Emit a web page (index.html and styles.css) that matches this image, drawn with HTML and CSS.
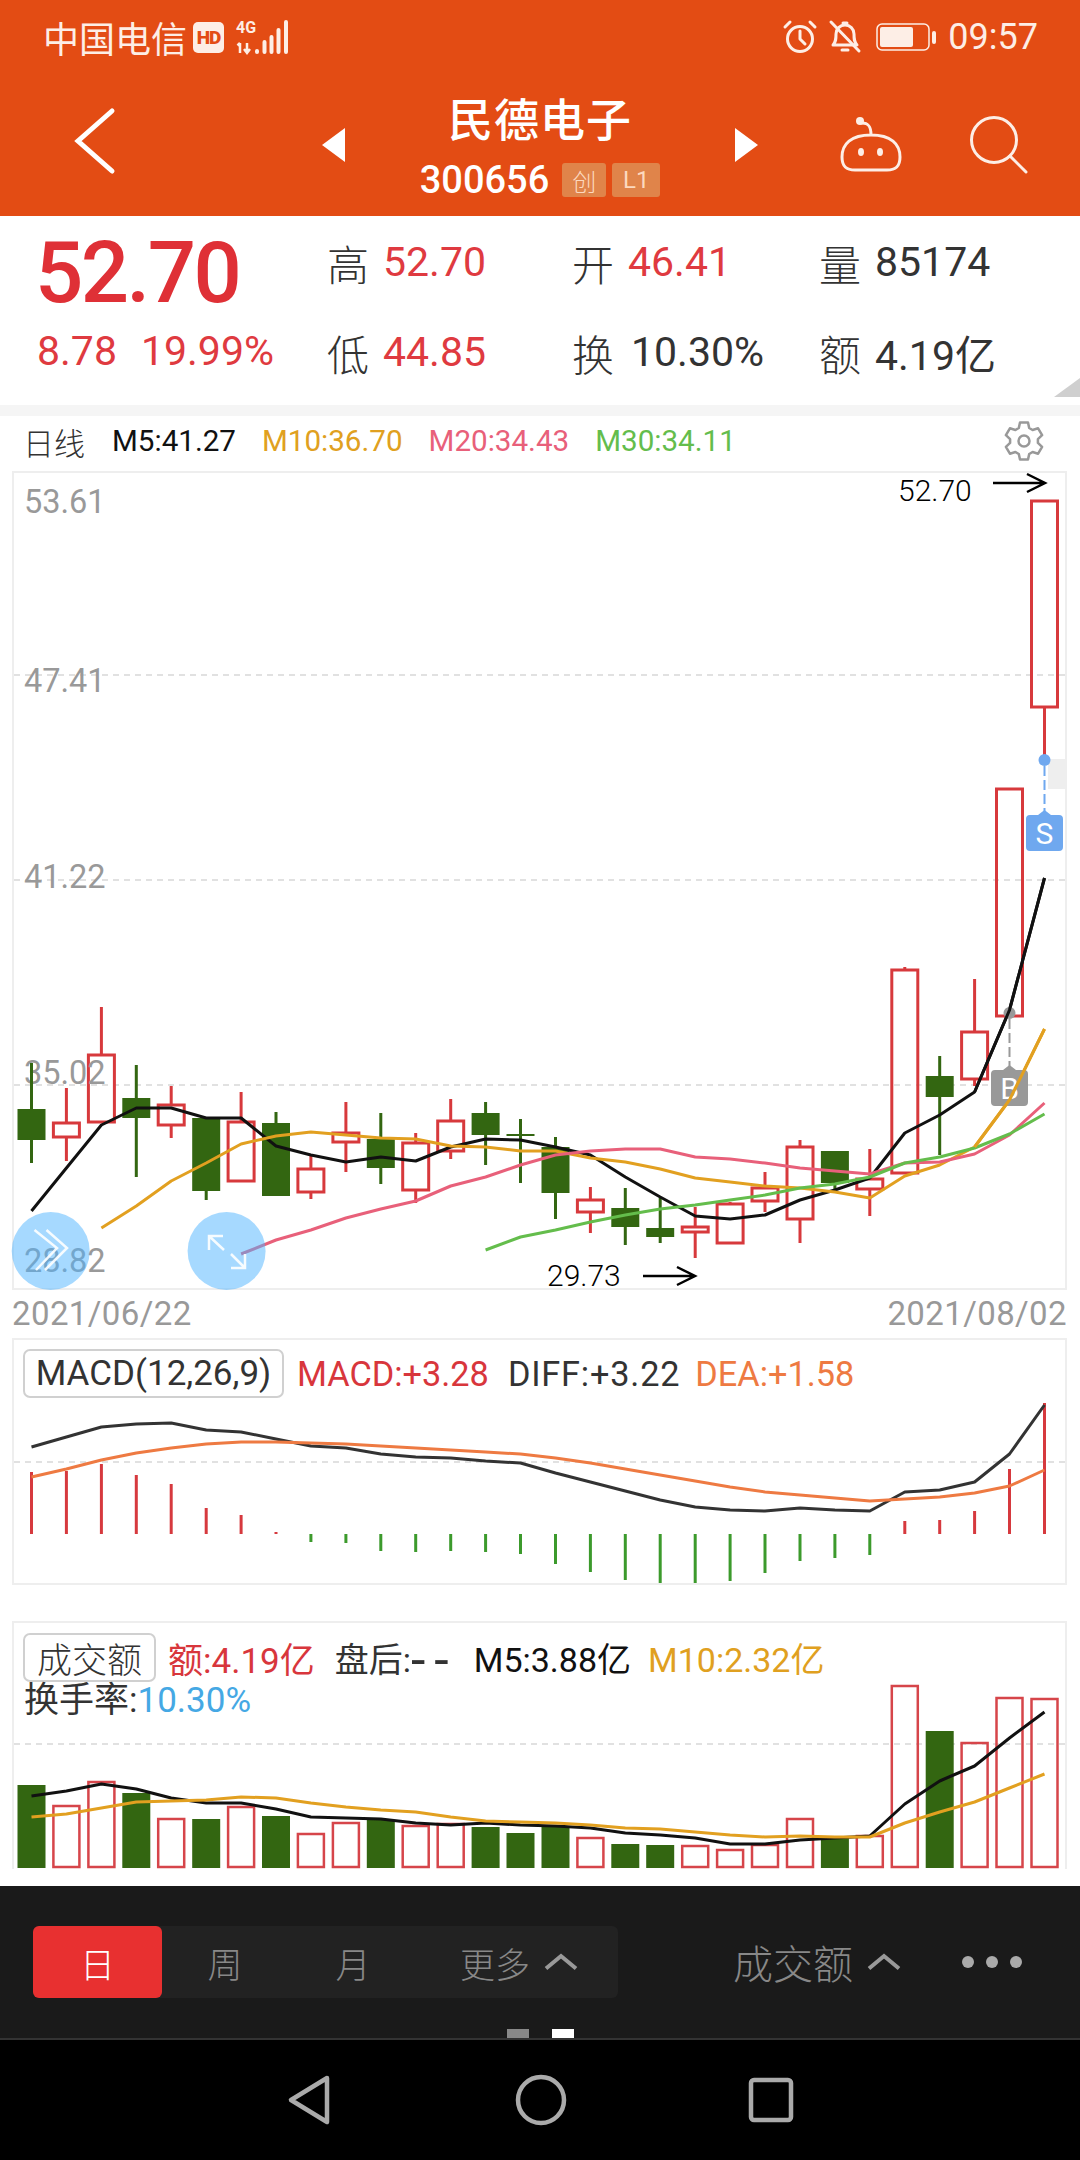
FILE: index.html
```html
<!DOCTYPE html>
<html lang="zh-CN">
<head>
<meta charset="utf-8">
<title>民德电子</title>
<link rel="stylesheet" href="styles.css">
</head>
<body>
<header class="top">
  <div class="status">
    <span class="carrier">中国电信</span>
    <span class="hd">HD</span>
    <svg class="signal" width="58" height="36" viewBox="0 0 58 36">
      <text class="sig-text" x="0" y="13">4G</text>
      <path class="sig-arrows" d="M4 23v10M1.5 25.5L4 23M11 23v8M8 29l3 4 3-4"/>
      <path class="sig-bars" d="M21 32v-1M28.500 32v-10M35.500 32v-15M42.500 32v-22M50 32V2"/>
    </svg>
    <span class="status-right">
      <svg class="st-icon" width="36" height="36" viewBox="0 0 36 36">
        <circle class="line" cx="18" cy="20" r="12.500"/>
        <path class="line" d="M18 12v8l5 5M3 8l5-5M33 8l-5-5"/>
      </svg>
      <svg class="st-icon" width="34" height="36" viewBox="0 0 34 36">
        <path class="line" d="M5 26c3-3 3-6 3-11 0-5 4-9 9-9s9 4 9 9c0 5 0 8 3 11z"/>
        <path class="line" d="M14 31h6M15 4h4M3 3l28 29"/>
      </svg>
      <svg class="batt" width="62" height="30" viewBox="0 0 62 30">
        <rect class="batt-case" x="1" y="2" width="52" height="26" rx="5"/>
        <rect class="batt-fill" x="4" y="5" width="33" height="20" rx="2"/>
        <rect class="batt-fill" x="56" y="9" width="4" height="13" rx="2"/>
      </svg>
      <span class="time">09:57</span>
    </span>
  </div>
  <div class="navrow">
    <div class="nav-left">
      <svg width="40" height="66" viewBox="0 0 40 66"><path class="back" d="M36 3L2 33l34 30"/></svg>
    </div>
    <div class="nav-center">
      <span class="tri tri-l"></span>
      <div class="stack">
        <div class="title">民德电子</div>
        <div class="coderow"><span class="code">300656</span><span class="tag">创</span><span class="tag tag-l">L1</span></div>
      </div>
      <span class="tri tri-r"></span>
    </div>
    <div class="nav-right">
      <svg width="64" height="58" viewBox="0 0 64 58">
        <path class="line" d="M32 20c-20 0-29 9-29 22 0 10 5 13 13 13h32c8 0 13-3 13-13 0-13-9-22-29-22zM32 20c0-8-2-12-9-12"/>
        <circle class="dot" cx="21" cy="6" r="4"/>
        <ellipse class="dot" cx="22" cy="37" rx="3" ry="4"/>
        <ellipse class="dot" cx="41" cy="37" rx="3" ry="4"/>
      </svg>
      <svg width="60" height="60" viewBox="0 0 60 60">
        <circle class="line" cx="25" cy="25" r="22.500"/>
        <path class="line" d="M41 41l16 16"/>
      </svg>
    </div>
  </div>
</header>

<section class="quote">
  <div class="big">52.70</div>
  <div class="cell"><span class="lab">高</span><span class="val up">52.70</span></div>
  <div class="cell"><span class="lab">开</span><span class="val up">46.41</span></div>
  <div class="cell"><span class="lab">量</span><span class="val">85174</span></div>
  <div class="sub"><span>8.78</span><span>19.99%</span></div>
  <div class="cell"><span class="lab">低</span><span class="val up">44.85</span></div>
  <div class="cell"><span class="lab">换</span><span class="val turn">10.30%</span></div>
  <div class="cell"><span class="lab">额</span><span class="val">4.19亿</span></div>
  <span class="corner"></span>
</section>
<div class="band"></div>

<main class="charts">
  <div class="legend">
    <span class="leg-day">日线</span>
    <span class="c-black">M5:41.27</span>
    <span class="c-gold">M10:36.70</span>
    <span class="c-pink">M20:34.43</span>
    <span class="c-green">M30:34.11</span>
    <svg class="gear" width="40" height="40" viewBox="0 0 40 40">
      <path class="gear-line" d="M14.800 7L16 1.400H24L25.200 7 28.600 9 34.100 7.300 38.100 14.100 33.900 18.100V21.900L38.100 25.900 34.100 32.700 28.600 31 25.200 33 24 38.600H16L14.800 33 11.400 31 5.900 32.700 1.900 25.900 6.100 21.900V18.100L1.900 14.100 5.900 7.300 11.400 9z"/>
      <circle class="gear-line" cx="20" cy="20" r="5.500"/>
    </svg>
  </div>

  <div class="panel panel-main">
    <svg class="plot" width="1051" height="815" viewBox="14 473 1051 815">
      <path class="grid" d="M14 675H1065M14 880H1065M14 1085H1065"/>
      <rect class="shade" x="1048" y="759" width="17" height="30"/>

      <g class="body-r">
        <rect x="53.400" y="1123" width="26" height="14"/>
        <rect x="88.400" y="1055" width="26" height="67"/>
        <rect x="158.200" y="1105" width="26" height="20"/>
        <rect x="228.100" y="1122" width="26" height="59"/>
        <rect x="297.900" y="1169" width="26" height="23"/>
        <rect x="332.900" y="1133" width="26" height="9"/>
        <rect x="402.700" y="1143" width="26" height="47"/>
        <rect x="437.700" y="1121" width="26" height="30"/>
        <rect x="577.400" y="1200" width="26" height="12"/>
        <rect x="682.200" y="1227" width="26" height="5"/>
        <rect x="717.100" y="1204" width="26" height="39"/>
        <rect x="752" y="1188" width="26" height="13"/>
        <rect x="787" y="1147" width="26" height="72"/>
        <rect x="856.800" y="1179" width="26" height="10"/>
        <rect x="891.800" y="970" width="26" height="203"/>
        <rect x="961.600" y="1032" width="26" height="47"/>
        <rect x="996.500" y="789" width="26" height="227"/>
        <rect x="1031.500" y="501" width="26" height="206"/>
      </g>

      <text class="axis" x="24" y="513">53.61</text>
      <text class="axis" x="24" y="692">47.41</text>
      <text class="axis" x="24" y="888">41.22</text>
      <text class="axis" x="24" y="1084">35.02</text>
      <text class="axis" x="24" y="1272">28.82</text>

      <path class="wick-g" d="M31.500 1063V1163M136.300 1065V1177M206.200 1191V1200M276 1112V1123M380.800 1113V1184M485.600 1102V1165M520.500 1119V1183M555.500 1137V1219M625.300 1188V1245M660.200 1198V1243M834.900 1183V1192M939.700 1056V1155"/>
      <path class="wick-r" d="M66.400 1088V1122M66.400 1138V1161M101.400 1007V1054M171.200 1086V1104M171.200 1126V1138M241.100 1092V1121M310.900 1155V1168M310.900 1193V1199M345.900 1102V1132M345.900 1143V1172M415.700 1133V1142M415.700 1191V1203M450.700 1099V1120M450.700 1152V1159M590.400 1187V1199M590.400 1213V1233M695.200 1207V1226M695.200 1233V1258M730.100 1202V1204M765 1172V1187M765 1202V1212M800 1140V1146M800 1220V1243M869.800 1149V1178M869.800 1190V1216M904.800 967V970M974.600 979V1031M974.600 1080V1086M1044.500 708V760"/>

      <g class="body-g">
        <rect x="17.500" y="1109" width="28" height="31"/>
        <rect x="122.300" y="1098" width="28" height="20"/>
        <rect x="192.200" y="1118" width="28" height="73"/>
        <rect x="262" y="1123" width="28" height="73"/>
        <rect x="366.800" y="1139" width="28" height="29"/>
        <rect x="471.600" y="1113" width="28" height="22"/>
        <rect x="506.500" y="1134" width="28" height="2"/>
        <rect x="541.500" y="1147" width="28" height="46"/>
        <rect x="611.300" y="1208" width="28" height="19"/>
        <rect x="646.200" y="1228" width="28" height="9"/>
        <rect x="820.900" y="1151" width="28" height="32"/>
        <rect x="925.700" y="1076" width="28" height="21"/>
      </g>

      <polyline class="ma m-black" points="31.500,1211 66.400,1168 101.400,1125 136.300,1108 171.200,1108 206.200,1118 241.100,1118 276,1146 310.900,1155 345.900,1162 380.800,1157 415.700,1161 450.700,1147 485.600,1139 520.500,1140 555.500,1147 590.400,1155 625.300,1177 660.200,1197 695.200,1216 730.100,1219 765,1215 800,1200 834.900,1190 869.800,1178 904.800,1133 939.700,1115 974.600,1092 1009.500,1010 1044.500,878"/>
      <polyline class="ma m-gold" points="101.400,1228 136.300,1206 171.200,1181 206.200,1163 241.100,1144 276,1136 310.900,1132 345.900,1135 380.800,1138 415.700,1139 450.700,1146 485.600,1147 520.500,1151 555.500,1151 590.400,1158 625.300,1162 660.200,1169 695.200,1178 730.100,1182 765,1186 800,1188 834.900,1192 869.800,1198 904.800,1176 939.700,1165 974.600,1147 1009.500,1100 1044.500,1029"/>
      <polyline class="ma m-pink" points="241.100,1254 276,1240 310.900,1230 345.900,1218 380.800,1209 415.700,1201 450.700,1186 485.600,1177 520.500,1165 555.500,1155 590.400,1151 625.300,1149 660.200,1149 695.200,1157 730.100,1159 765,1163 800,1168 834.900,1171 869.800,1174 904.800,1163 939.700,1162 974.600,1154 1009.500,1135 1044.500,1103"/>
      <polyline class="ma m-green" points="485.600,1250 520.500,1237 555.500,1230 590.400,1222 625.300,1215 660.200,1209 695.200,1205 730.100,1200 765,1195 800,1188 834.900,1184 869.800,1177 904.800,1163 939.700,1157 974.600,1148 1009.500,1134 1044.500,1114"/>

      <circle class="pin-s" cx="1044.500" cy="760" r="6"/>
      <path class="dash-s" d="M1044.500 766V812"/>
      <path class="pin-s" d="M1030 815h8l6.500-5 6.500 5h8a4 4 0 0 1 4 4v28a4 4 0 0 1-4 4h-29a4 4 0 0 1-4-4v-28a4 4 0 0 1 4-4z"/>
      <text class="pin-text" x="1044.500" y="844">S</text>

      <circle class="pin-b" cx="1009.500" cy="1013" r="6"/>
      <path class="dash-b" d="M1009.500 1019V1066"/>
      <path class="pin-b" d="M995 1070h8l6.500-5 6.500 5h8a4 4 0 0 1 4 4v28a4 4 0 0 1-4 4h-29a4 4 0 0 1-4-4v-28a4 4 0 0 1 4-4z"/>
      <text class="pin-text" x="1009.500" y="1099">B</text>
      <polyline class="m-gold-over" points="974.600,1147 1009.500,1100 1044.500,1029"/>
      <polyline class="m-black-over" points="974.600,1092 1009.500,1010 1044.500,878"/>

      <text class="note" x="898" y="501">52.70</text>
      <path class="arrow" d="M993 483H1045M1027 474l18 9-18 9"/>
      <text class="note" x="547" y="1286">29.73</text>
      <path class="arrow" d="M643 1276H695M677 1267l18 9-18 9"/>

      <circle class="float" cx="50.700" cy="1251" r="39"/>
      <circle class="float" cx="226.600" cy="1251" r="39"/>
      <path class="float-icon" d="M34.500 1230L57 1248 36 1270M46.500 1230L67 1248 45 1270"/>
      <path class="float-icon" d="M209 1236L224 1250M209 1250V1236H223M231 1254L245 1268M245 1254V1268H231"/>
    </svg>
  </div>

  <div class="dates"><span>2021/06/22</span><span>2021/08/02</span></div>

  <div class="panel panel-macd">
    <div class="over macd-legend">
      <span class="boxed">MACD(12,26,9)</span>
      <span class="c-red">MACD:+3.28</span>
      <span class="c-dark diff">DIFF:+3.22</span>
      <span class="c-orange">DEA:+1.58</span>
    </div>
    <svg class="plot" width="1051" height="243" viewBox="14 1340 1051 243">
      <path class="grid" d="M14 1462H1065"/>
      <path class="bar-r" d="M31.500 1534V1472M66.400 1534V1471M101.400 1534V1464M136.300 1534V1475M171.200 1534V1484M206.200 1534V1508M241.100 1534V1515M276 1534V1532M904.800 1534V1521M939.700 1534V1520M974.600 1534V1511M1009.500 1534V1469M1044.500 1534V1403"/>
      <path class="bar-g" d="M310.900 1534V1542M345.900 1534V1543M380.800 1534V1551M415.700 1534V1552M450.700 1534V1551M485.600 1534V1552M520.500 1534V1554M555.500 1534V1564M590.400 1534V1572M625.300 1534V1580M660.200 1534V1583M695.200 1534V1583M730.100 1534V1581M765 1534V1573M800 1534V1561M834.900 1534V1558M869.800 1534V1555"/>
      <polyline class="ma m-dark" points="31.500,1447 66.400,1437 101.400,1427 136.300,1424 171.200,1423 206.200,1430 241.100,1432 276,1439 310.900,1446 345.900,1448 380.800,1454 415.700,1457 450.700,1458 485.600,1461 520.500,1463 555.500,1473 590.400,1482 625.300,1491 660.200,1500 695.200,1507 730.100,1510 765,1511 800,1508 834.900,1510 869.800,1511 904.800,1492 939.700,1490 974.600,1482 1009.500,1454 1044.500,1405"/>
      <polyline class="ma m-orange" points="31.500,1477 66.400,1469 101.400,1460 136.300,1453 171.200,1448 206.200,1444 241.100,1442 276,1442 310.900,1443 345.900,1444 380.800,1446 415.700,1448 450.700,1450 485.600,1452 520.500,1454 555.500,1458 590.400,1463 625.300,1469 660.200,1475 695.200,1481 730.100,1487 765,1492 800,1495 834.900,1498 869.800,1501 904.800,1499 939.700,1497 974.600,1493 1009.500,1486 1044.500,1470"/>
    </svg>
  </div>

  <div class="panel panel-vol">
    <div class="over vol-legend">
      <div class="vol-row">
        <span class="boxed boxed-cn">成交额</span>
        <span class="c-red vol-first">额:4.19亿</span>
        <span class="c-dark">盘后:<span class="dashes">--</span></span>
        <span class="c-black">M5:3.88亿</span>
        <span class="c-gold vol-last">M10:2.32亿</span>
      </div>
      <div class="vol-row2"><span class="c-dark">换手率:</span><span class="c-blue">10.30%</span></div>
    </div>
    <svg class="plot" width="1051" height="246" viewBox="14 1623 1051 246">
      <path class="grid" d="M14 1744H1065"/>
      <g class="body-g">
        <rect x="17.500" y="1785" width="28" height="83"/>
        <rect x="122.300" y="1793" width="28" height="75"/>
        <rect x="192.200" y="1819" width="28" height="49"/>
        <rect x="262" y="1816" width="28" height="52"/>
        <rect x="366.800" y="1820" width="28" height="48"/>
        <rect x="471.600" y="1827" width="28" height="41"/>
        <rect x="506.500" y="1833" width="28" height="35"/>
        <rect x="541.500" y="1826" width="28" height="42"/>
        <rect x="611.300" y="1844" width="28" height="24"/>
        <rect x="646.200" y="1845" width="28" height="23"/>
        <rect x="820.900" y="1838" width="28" height="30"/>
        <rect x="925.700" y="1731" width="28" height="137"/>
      </g>
      <g class="vol-r">
        <rect x="53.400" y="1806" width="26" height="61"/>
        <rect x="88.400" y="1782" width="26" height="85"/>
        <rect x="158.200" y="1819" width="26" height="48"/>
        <rect x="228.100" y="1807" width="26" height="60"/>
        <rect x="297.900" y="1834" width="26" height="33"/>
        <rect x="332.900" y="1823" width="26" height="44"/>
        <rect x="402.700" y="1826" width="26" height="41"/>
        <rect x="437.700" y="1824" width="26" height="43"/>
        <rect x="577.400" y="1838" width="26" height="29"/>
        <rect x="682.200" y="1846" width="26" height="21"/>
        <rect x="717.100" y="1850" width="26" height="17"/>
        <rect x="752" y="1845" width="26" height="22"/>
        <rect x="787" y="1819" width="26" height="48"/>
        <rect x="856.800" y="1836" width="26" height="31"/>
        <rect x="891.800" y="1686" width="26" height="181"/>
        <rect x="961.600" y="1743" width="26" height="124"/>
        <rect x="996.500" y="1698" width="26" height="169"/>
        <rect x="1031.500" y="1699" width="26" height="168"/>
      </g>
      <polyline class="ma m-black" points="31.500,1796 66.400,1791 101.400,1784 136.300,1789 171.200,1798 206.200,1803 241.100,1803 276,1809 310.900,1817 345.900,1818 380.800,1819 415.700,1823 450.700,1825 485.600,1823 520.500,1825 555.500,1826 590.400,1828 625.300,1833 660.200,1835 695.200,1838 730.100,1844 765,1844 800,1840 834.900,1838 869.800,1836 904.800,1804 939.700,1781 974.600,1766 1009.500,1738 1044.500,1712"/>
      <polyline class="ma m-gold" points="31.500,1817 66.400,1814 101.400,1808 136.300,1802 171.200,1801 206.200,1800 241.100,1797 276,1798 310.900,1803 345.900,1807 380.800,1810 415.700,1812 450.700,1817 485.600,1821 520.500,1822 555.500,1823 590.400,1825 625.300,1828 660.200,1829 695.200,1832 730.100,1835 765,1837 800,1836 834.900,1837 869.800,1837 904.800,1823 939.700,1812 974.600,1802 1009.500,1788 1044.500,1774"/>
    </svg>
  </div>
</main>

<section class="toolbar">
  <div class="tabs">
    <span class="tab tab-on">日</span>
    <span class="tab tab-a">周</span>
    <span class="tab tab-b">月</span>
    <span class="tab tab-more">更多
      <svg class="caret" width="34" height="16" viewBox="0 0 34 16"><path d="M2 14.500L17 2l15 12.500"/></svg>
    </span>
  </div>
  <div class="ind">成交额
    <svg class="caret" width="34" height="16" viewBox="0 0 34 16"><path d="M2 14.500L17 2l15 12.500"/></svg>
  </div>
  <div class="dots"><i></i><i></i><i></i></div>
  <div class="pager"><i></i><i class="on"></i></div>
</section>

<nav class="sysnav">
  <svg class="k-back" width="42" height="50" viewBox="0 0 42 50"><path d="M39 3L3 25l36 22z"/></svg>
  <svg class="k-home" width="50" height="50" viewBox="0 0 50 50"><circle cx="25" cy="25" r="23"/></svg>
  <svg class="k-recent" width="44" height="44" viewBox="0 0 44 44"><rect x="2" y="2" width="40" height="40" rx="3"/></svg>
</nav>
</body>
</html>
```
FILE: styles.css
```css
* { box-sizing: border-box; }
html, body { margin: 0; padding: 0; }
body {
  width: 1080px;
  height: 2160px;
  display: flex;
  flex-direction: column;
  overflow: hidden;
  background: #fff;
  font-family: Roboto, "Noto Sans CJK SC", sans-serif;
}
svg { display: block; overflow: visible; }

/* header */
.top { background: #e34c14; height: 216px; color: #fdeee6; flex: none; }
.status { height: 74px; display: flex; align-items: center; padding: 0 42px 0 43px; }
.carrier { font-size: 36px; font-family: "Noto Sans CJK SC", sans-serif; font-weight: 400; line-height: 40px; }
.hd {
  width: 31px; height: 31px; margin-left: 6px; border-radius: 5px;
  background: #fdeee6; color: #e34c14; font-size: 19px; font-weight: 900;
  display: flex; align-items: center; justify-content: center; letter-spacing: -1px;
}
.signal { margin-left: 12px; margin-top: 2px; }
.sig-text { font-size: 16px; font-weight: 700; fill: #fdeee6; }
.sig-arrows { fill: none; stroke: #fdeee6; stroke-width: 2.500; }
.sig-bars { fill: none; stroke: #fdeee6; stroke-width: 4; stroke-linecap: round; }
.status-right { margin-left: auto; display: flex; align-items: center; }
.st-icon { margin-right: 10px; }
.batt { margin-left: 4px; }
.batt-case { fill: none; stroke: #fdeee6; stroke-width: 1.500; }
.batt-fill { fill: #fdeee6; }
.time { font-size: 36px; margin-left: 10px; font-weight: 400; line-height: 40px; }
.line { fill: none; stroke: #fdeee6; stroke-width: 3; stroke-linecap: round; stroke-linejoin: round; }
.dot { fill: #fdeee6; }

.navrow { display: grid; grid-template-columns: 1fr 436px 1fr; height: 142px; }
.nav-left { padding: 34px 0 0 76px; }
.back { fill: none; stroke: #fff; stroke-width: 5; stroke-linecap: round; stroke-linejoin: miter; }
.nav-center { display: flex; align-items: center; justify-content: space-between; }
.tri { width: 0; height: 0; border-top: 17.500px solid transparent; border-bottom: 17.500px solid transparent; }
.tri-l { border-right: 23px solid #fff; }
.tri-r { border-left: 23px solid #fff; }
.stack { display: flex; flex-direction: column; align-items: center; align-self: flex-start; }
.title {
  font-family: "Noto Sans CJK SC", sans-serif; font-size: 45px; font-weight: 500;
  line-height: 60px; margin-top: 14px; color: #fff; letter-spacing: 1px;
}
.coderow { display: flex; align-items: center; margin-top: 15px; height: 34px; }
.code { font-size: 38px; font-weight: 500; color: #fff; margin-right: 13px; letter-spacing: 0; }
.tag {
  width: 44px; height: 34px; background: #e0844a; color: #fcd9bf; border-radius: 3px;
  font-size: 24px; display: flex; align-items: center; justify-content: center;
  font-family: "Noto Sans CJK SC", sans-serif; font-weight: 300;
}
.tag-l { width: 48px; margin-left: 6px; font-family: Roboto, sans-serif; font-weight: 400; }
.nav-right { display: flex; justify-content: flex-end; padding: 41px 51px 0 0; gap: 66px; align-items: flex-start; }

/* quote */
.quote {
  position: relative; flex: none; height: 189px; padding: 16px 0 0 38px;
  display: grid; grid-template-columns: 290px 245px 247px 1fr; grid-template-rows: 60px 60px; row-gap: 30px;
}
.big { font-size: 85px; line-height: 60px; margin: 11px 0 0 -3px; color: #df3036; font-weight: 500; letter-spacing: -2.500px; }
.sub { font-size: 41px; line-height: 60px; color: #df3a40; display: flex; gap: 24px; margin: -1px 0 0 -1px; }
.cell { display: flex; align-items: center; gap: 14px; height: 60px; }
.lab { font-size: 42px; font-family: "Noto Sans CJK SC", sans-serif; font-weight: 300; color: #333; margin-left: -1px; }
.val { font-size: 41px; color: #333; }
.val.up { color: #df3a40; }
.val.turn { margin-left: 3px; }
.corner {
  position: absolute; right: 0; bottom: 8px; width: 0; height: 0;
  border-left: 26px solid transparent; border-bottom: 19px solid #cfcfcf;
}
.band { height: 11px; background: #f5f5f5; flex: none; }

/* charts */
.charts { flex: 1; min-height: 0; display: flex; flex-direction: column; }
.legend { height: 55px; flex: none; display: flex; align-items: center; gap: 26px; padding: 0 36px 5px 23px; font-size: 29.600px; }
.leg-day { font-family: "Noto Sans CJK SC", sans-serif; font-weight: 300; color: #333; font-size: 31px; margin-right: 1px; }
.gear { margin-left: auto; }
.gear-line { fill: none; stroke: #999; stroke-width: 2.500; stroke-linejoin: round; }
.c-black { color: #111; }
.c-gold { color: #e0a020; }
.c-pink { color: #e8607a; }
.c-green { color: #64bd4c; }
.c-red { color: #d8363c; }
.c-dark { color: #333; }
.c-orange { color: #ee7a42; }
.c-blue { color: #45a8e4; }

.panel { position: relative; flex: none; margin: 0 13px 0 12px; border: 2px solid #eee; }
.panel-main { height: 819px; }
.panel-macd { height: 247px; }
.panel-vol { height: 248px; margin-top: 36px; border-bottom: 0; }
.grid { fill: none; stroke: #d8d8d8; stroke-width: 1.500; stroke-dasharray: 6 5; }
.shade { fill: #eee; }
.axis { font-size: 32.500px; fill: #999; font-family: Roboto, sans-serif; }
.note { font-size: 30px; fill: #000; font-family: Roboto, sans-serif; font-weight: 300; }
.arrow { fill: none; stroke: #000; stroke-width: 2.500; }
.wick-g { fill: none; stroke: #336611; stroke-width: 3; }
.wick-r { fill: none; stroke: #d7393c; stroke-width: 3; }
.body-g { fill: #336611; }
.body-r { fill: none; stroke: #d7393c; stroke-width: 3; }
.vol-r { fill: none; stroke: #d6454a; stroke-width: 2.500; }
.bar-r { fill: none; stroke: #d6393e; stroke-width: 3; }
.bar-g { fill: none; stroke: #3c9a2c; stroke-width: 3; }
.ma { fill: none; stroke-width: 3; stroke-linejoin: round; }
.m-black { stroke: #111; }
.m-gold { stroke: #e2a020; }
.m-pink { stroke: #e8607a; }
.m-green { stroke: #64bd4c; }
.m-dark { stroke: #333; }
.m-orange { stroke: #ee7a42; }
.m-gold-over { fill: none; stroke: #e2a020; stroke-width: 3; }
.m-black-over { fill: none; stroke: #111; stroke-width: 3; }
.pin-s { fill: #6fa8ef; }
.pin-b { fill: #999; }
.dash-s { fill: none; stroke: #6fa8ef; stroke-width: 2; stroke-dasharray: 10 4; }
.dash-b { fill: none; stroke: #999; stroke-width: 2; stroke-dasharray: 10 4; }
.pin-text { font-size: 30px; fill: #fff; text-anchor: middle; font-family: Roboto, sans-serif; }
.float { fill: rgba(77, 179, 255, 0.5); }
.float-icon { fill: none; stroke: #fff; stroke-width: 2.500; opacity: 0.9; }

.dates {
  height: 48px; flex: none; display: flex; align-items: center; justify-content: space-between;
  padding: 0 13px 1px 12px; font-size: 33px; color: #999; letter-spacing: 0.400px;
}

.over { position: absolute; left: 9px; top: 9px; font-size: 34.300px; z-index: 1; }
.macd-legend { display: flex; align-items: center; gap: 21px; right: 0; white-space: nowrap; }
.diff { letter-spacing: 0.800px; margin: 0 -6px 0 -2px; }
.boxed {
  height: 49px; border: 2px solid #d0d0d0; border-radius: 7px; background: #fff; color: #333;
  display: flex; align-items: center; justify-content: center; width: 261px; font-size: 35px; margin-right: -8px;
}
.boxed-cn { width: 133px; font-family: "Noto Sans CJK SC", sans-serif; font-weight: 300; font-size: 35px; margin-right: 0; }
.vol-legend { font-size: 34px; }
.vol-row { display: flex; align-items: center; gap: 20px; white-space: nowrap; }
.vol-first { margin-left: -8px; font-size: 35px; }
.vol-last { margin-left: -3px; }
.dashes { font-size: 52px; line-height: 0; letter-spacing: 9px; margin-right: -4px; vertical-align: -6px; }
.vol-row2 { margin: 0 0 0 1px; line-height: 36px; font-size: 35px; white-space: nowrap; }

/* toolbar */
.toolbar { position: relative; flex: none; height: 154px; background: #1a1a1a; display: flex; align-items: flex-start; padding: 40px 0 0 33px; border-bottom: 2px solid #333; }
.tabs { display: flex; width: 585px; height: 72px; background: #222; border-radius: 6px; color: #888; }
.tab { display: flex; align-items: center; justify-content: center; font-family: "Noto Sans CJK SC", sans-serif; font-weight: 300; font-size: 35px; }
.tab-on { width: 129px; background: #e83030; color: #fff; border-radius: 6px; }
.tab-a { width: 126px; }
.tab-b { width: 130px; }
.tab-more { padding-left: 42px; gap: 14px; justify-content: flex-start; }
.caret { flex: none; }
.caret path { fill: none; stroke: #999; stroke-width: 4; }
.ind { margin-left: 115px; height: 72px; display: flex; align-items: center; gap: 14px; color: #888; font-size: 40px; font-family: "Noto Sans CJK SC", sans-serif; font-weight: 300; }
.dots { margin-left: 61px; height: 72px; display: flex; align-items: center; gap: 12px; }
.dots i { width: 12px; height: 12px; border-radius: 50%; background: #aaa; }
.pager { position: absolute; left: 507px; top: 143px; display: flex; gap: 23px; }
.pager i { width: 22px; height: 9px; background: #888; }
.pager i.on { background: #fff; }

/* system nav */
.sysnav { flex: none; height: 120px; background: #000; display: flex; align-items: center; padding-left: 288px; }
.sysnav path, .sysnav circle, .sysnav rect { fill: none; stroke: #aaa; stroke-width: 4.500; stroke-linejoin: round; }
.k-home { margin-left: 186px; }
.k-recent { margin-left: 183px; }
```
